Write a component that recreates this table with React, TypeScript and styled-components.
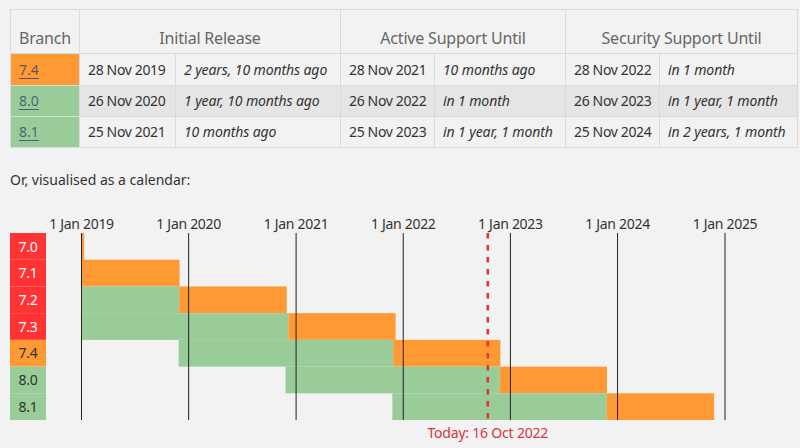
import React from "react";
import styled, { createGlobalStyle } from "styled-components";

const GlobalStyle = createGlobalStyle`
  html, body { margin: 0; padding: 0; background: #f2f2f2; }
  body {
    font-family: "Noto Sans", "Open Sans", "DejaVu Sans", sans-serif;
    color: #333;
  }
`;

const Page = styled.main`
  width: 800px;
  height: 448px;
  box-sizing: border-box;
  padding: 9px 3px 0 10px;
  overflow: hidden;
`;

const Table = styled.table`
  border-collapse: collapse;
  table-layout: fixed;
  width: 787px;
`;

const Col = styled.col<{ $w: number }>`
  width: ${(p) => p.$w}px;
`;

const HeadRow = styled.tr`
  height: 44px;
`;

const BodyRow = styled.tr<{ $h: number; $shade?: boolean }>`
  height: ${(p) => p.$h}px;
  background: ${(p) => (p.$shade ? "#e5e5e5" : "transparent")};
`;

const Th = styled.th<{ $left?: boolean }>`
  border: 1px solid #dadada;
  padding: 0 8px 4px;
  vertical-align: bottom;
  text-align: ${(p) => (p.$left ? "left" : "center")};
  font-weight: normal;
  font-size: 16px;
  line-height: 22px;
  color: #666;
  letter-spacing: -0.2px;
  white-space: nowrap;
`;

const Td = styled.td<{ $italic?: boolean }>`
  border: 1px solid #dadada;
  padding: 0 8px;
  font-size: 14px;
  line-height: 20px;
  font-style: ${(p) => (p.$italic ? "italic" : "normal")};
  letter-spacing: ${(p) => (p.$italic ? "-0.1px" : "-0.35px")};
  white-space: nowrap;
  color: #333;
`;

const BranchCell = styled.td<{ $state: "security" | "stable" }>`
  border: 1px solid #dadada;
  padding: 0 8px;
  font-size: 14px;
  line-height: 20px;
  background: ${(p) => (p.$state === "security" ? "#ff9933" : "#99cc99")};
`;

const BranchLink = styled.a`
  color: rgba(28, 60, 110, 0.72);
  text-decoration: underline;
  text-underline-offset: 3px;
  text-decoration-thickness: 1px;
`;

const Note = styled.p`
  margin: 22px 0 0;
  font-size: 14px;
  line-height: 20px;
  color: #333;
`;

const Chart = styled.svg`
  display: block;
  margin-top: 10px;
  overflow: visible;
`;

const YearLabel = styled.text`
  font-family: "Noto Sans", "Open Sans", sans-serif;
  font-size: 14px;
  fill: #333;
  letter-spacing: -0.3px;
`;

const BranchLabel = styled.text<{ $light?: boolean }>`
  font-family: "Noto Sans", "Open Sans", sans-serif;
  font-size: 14px;
  fill: ${(p) => (p.$light ? "#ffffff" : "#333333")};
  letter-spacing: -0.3px;
`;

const TodayLabel = styled.text`
  font-family: "Noto Sans", "Open Sans", sans-serif;
  font-size: 14px;
  fill: #d9333f;
  letter-spacing: -0.2px;
`;

type Ymd = [number, number, number];

interface Branch {
  v: string;
  state: "eol" | "security" | "stable";
  release: Ymd;
  active: Ymd;
  security: Ymd;
}

const BRANCHES: Branch[] = [
  { v: "7.0", state: "eol", release: [2015, 12, 3], active: [2017, 12, 3], security: [2019, 1, 10] },
  { v: "7.1", state: "eol", release: [2016, 12, 1], active: [2018, 12, 1], security: [2019, 12, 1] },
  { v: "7.2", state: "eol", release: [2017, 11, 30], active: [2019, 11, 30], security: [2020, 11, 30] },
  { v: "7.3", state: "eol", release: [2018, 12, 6], active: [2020, 12, 6], security: [2021, 12, 6] },
  { v: "7.4", state: "security", release: [2019, 11, 28], active: [2021, 11, 28], security: [2022, 11, 28] },
  { v: "8.0", state: "stable", release: [2020, 11, 26], active: [2022, 11, 26], security: [2023, 11, 26] },
  { v: "8.1", state: "stable", release: [2021, 11, 25], active: [2023, 11, 25], security: [2024, 11, 25] },
];

const START = Date.UTC(2019, 0, 1);
const END = Date.UTC(2025, 0, 1);
const X0 = 71.5;
const X1 = 715;
const PX_PER_MS = (X1 - X0) / (END - START);
const ROW_TOP = 33;
const ROW_H = 26.72;
const LABEL_W = 36;

const xOf = ([y, m, d]: Ymd) => X0 + (Date.UTC(y, m - 1, d) - START) * PX_PER_MS;
const clampX = (x: number) => Math.max(X0, x);

const STATE_FILL = { eol: "#ff3333", security: "#ff9933", stable: "#99cc99" };

const YEARS = [2019, 2020, 2021, 2022, 2023, 2024, 2025];

function Calendar() {
  const bottom = ROW_TOP + ROW_H * BRANCHES.length;
  const todayX = xOf([2022, 10, 16]);
  return (
    <Chart width={790} height={248} viewBox="0 0 790 248">
      {BRANCHES.map((b, i) => {
        const y = ROW_TOP + i * ROW_H;
        const relX = clampX(xOf(b.release));
        const actX = clampX(xOf(b.active));
        const secX = clampX(xOf(b.security));
        return (
          <g key={b.v}>
            <rect x={0} y={y} width={LABEL_W} height={ROW_H} fill={STATE_FILL[b.state]} />
            <BranchLabel x={LABEL_W / 2} y={y + 18.5} textAnchor="middle" $light={b.state === "eol"}>
              {b.v}
            </BranchLabel>
            {actX > relX && <rect x={relX} y={y} width={actX - relX} height={ROW_H} fill="#99cc99" />}
            {secX > actX && <rect x={actX} y={y} width={secX - actX} height={ROW_H} fill="#ff9933" />}
          </g>
        );
      })}
      {YEARS.map((yr) => {
        const x = xOf([yr, 1, 1]);
        return (
          <g key={yr}>
            <line x1={x} x2={x} y1={ROW_TOP} y2={bottom} stroke="#222" strokeWidth={1} />
            <YearLabel x={x} y={28.5} textAnchor="middle">
              1 Jan {yr}
            </YearLabel>
          </g>
        );
      })}
      <line
        x1={todayX}
        x2={todayX}
        y1={ROW_TOP}
        y2={bottom}
        stroke="#e0353d"
        strokeWidth={2.6}
        strokeDasharray="5.5 6.5"
      />
      <TodayLabel x={todayX} y={238} textAnchor="middle">
        Today: 16 Oct 2022
      </TodayLabel>
    </Chart>
  );
}

interface Row {
  v: string;
  state: "security" | "stable";
  init: [string, string];
  active: [string, string];
  security: [string, string];
  h: number;
  shade?: boolean;
}

const ROWS: Row[] = [
  { v: "7.4", state: "security", init: ["28 Nov 2019", "2 years, 10 months ago"], active: ["28 Nov 2021", "10 months ago"], security: ["28 Nov 2022", "in 1 month"], h: 32 },
  { v: "8.0", state: "stable", init: ["26 Nov 2020", "1 year, 10 months ago"], active: ["26 Nov 2022", "in 1 month"], security: ["26 Nov 2023", "in 1 year, 1 month"], h: 31, shade: true },
  { v: "8.1", state: "stable", init: ["25 Nov 2021", "10 months ago"], active: ["25 Nov 2023", "in 1 year, 1 month"], security: ["25 Nov 2024", "in 2 years, 1 month"], h: 31 },
];

export default function App() {
  return (
    <>
      <GlobalStyle />
      <Page>
        <Table>
          <colgroup>
            {[69, 96, 165, 94, 131, 94, 138].map((w, i) => (
              <Col key={i} $w={w} />
            ))}
          </colgroup>
          <thead>
            <HeadRow>
              <Th $left>Branch</Th>
              <Th colSpan={2}>Initial Release</Th>
              <Th colSpan={2}>Active Support Until</Th>
              <Th colSpan={2}>Security Support Until</Th>
            </HeadRow>
          </thead>
          <tbody>
            {ROWS.map((r) => (
              <BodyRow key={r.v} $h={r.h} $shade={r.shade}>
                <BranchCell $state={r.state}>
                  <BranchLink href="#">{r.v}</BranchLink>
                </BranchCell>
                <Td>{r.init[0]}</Td>
                <Td $italic>{r.init[1]}</Td>
                <Td>{r.active[0]}</Td>
                <Td $italic>{r.active[1]}</Td>
                <Td>{r.security[0]}</Td>
                <Td $italic>{r.security[1]}</Td>
              </BodyRow>
            ))}
          </tbody>
        </Table>
        <Note>Or, visualised as a calendar:</Note>
        <Calendar />
      </Page>
    </>
  );
}
